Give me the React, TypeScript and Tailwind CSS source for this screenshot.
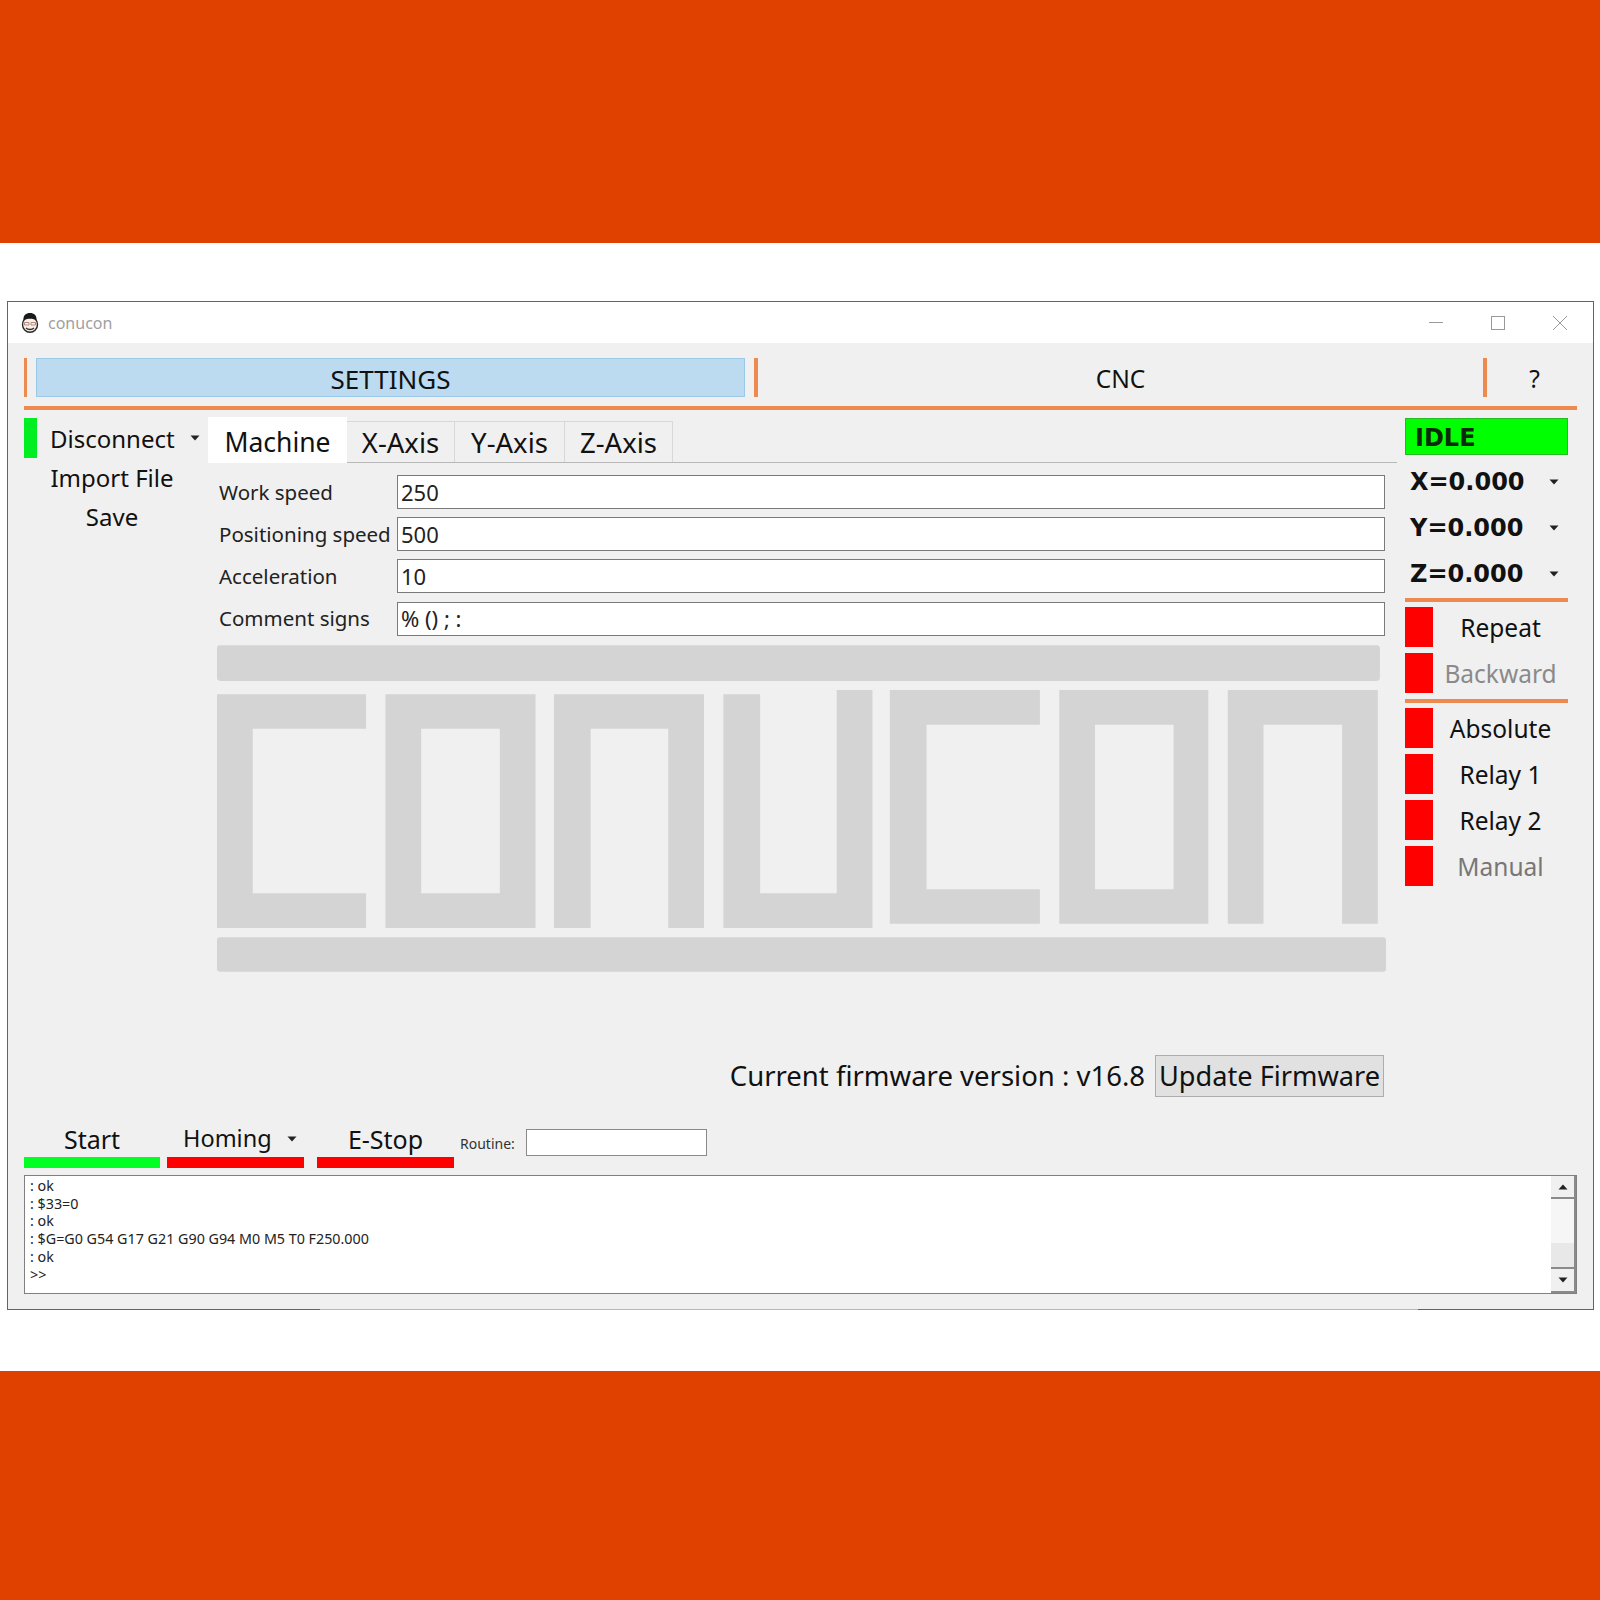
const ui = { fontFamily: '"Noto Sans", sans-serif' };
const heavy = { fontFamily: '"DejaVu Sans", sans-serif' };

const Arrow = ({ className = '' }: { className?: string }) => (
  <svg width="10" height="6" viewBox="0 0 10 6" className={className}>
    <polygon points="0.5,0.5 9.5,0.5 5,5.5" fill="#222" />
  </svg>
);

const Face = () => (
  <svg width="20" height="22" viewBox="0 0 20 22">
    <ellipse cx="10" cy="12.5" rx="7.5" ry="7.8" fill="#faf0e6" stroke="#2a2a2a" strokeWidth="1.4" />
    <path d="M3.5 8.5 C3 3 6 1 10 1 C14 1 17 3 16.5 8.5 C14 6 6 6 3.5 8.5Z" fill="#1a1a1a" />
    <path d="M4.5 10.5H9V13H4.5ZM11 10.5H15.5V13H11Z" fill="none" stroke="#b98a80" strokeWidth="1" />
    <path d="M6 16 C8 18 12 18 14 16" fill="none" stroke="#333" strokeWidth="1.3" />
  </svg>
);

const Logo = () => (
  <svg width="1169" height="327" viewBox="213 632 1145 320" className="block" fill="#d4d4d4">
    <rect x="213" y="632" width="1139" height="35" rx="3" />
    <path d="M213 680H359V714H248V875H359V909H213Z" />
    <path fillRule="evenodd" d="M378 680H525V909H378ZM413 714V875H490V714Z" />
    <path d="M543 680H690V909H655V714H579V909H543Z" />
    <path d="M709 680H745V875H820V676H855V909H709Z" />
    <path d="M872 676H1019V710H908V871H1019V905H872Z" />
    <path fillRule="evenodd" d="M1038 676H1184V905H1038ZM1073 710V871H1150V710Z" />
    <path d="M1203 676H1350V905H1315V710H1238V905H1203Z" />
    <rect x="213" y="918" width="1145" height="34" rx="3" />
  </svg>
);

const fields = [
  ['Work speed', '250'],
  ['Positioning speed', '500'],
  ['Acceleration', '10'],
  ['Comment signs', '% () ; :'],
];

const axes = ['X=0.000', 'Y=0.000', 'Z=0.000'];

const LedRow = ({ label, dim, muted }: { label: string; dim?: boolean; muted?: boolean }) => (
  <div className="flex h-[40px] items-center">
    <div className="h-[40px] w-[28px] bg-[#ff0000]" />
    <span className={`flex-1 pt-[2px] text-center text-[24.5px] ${dim ? 'text-[#8a8a8a]' : muted ? 'text-[#777]' : 'text-[#111]'}`}>{label}</span>
  </div>
);

export default function App() {
  return (
    <div className="flex h-[1600px] w-[1600px] flex-col bg-white" style={ui}>
      <div className="h-[243px] bg-[#e04000]" />
      <div className="flex-1 pl-[7px] pt-[58px]">
        <div className="flex h-[1009px] w-[1587px] flex-col border-x border-t border-[#5c666e] bg-[#f0f0f0]">
          <div className="flex h-[41px] items-center bg-white pl-[12px] pr-[26px]">
            <Face />
            <span className="ml-[8px] text-[16px] text-[#a0a0a0]">conucon</span>
            <div className="ml-auto flex items-center gap-[48px]">
              <div className="h-px w-[14px] bg-[#999]" />
              <div className="h-[14px] w-[14px] border border-[#999]" />
              <svg width="14" height="14" viewBox="0 0 14 14" stroke="#999" strokeWidth="1"><path d="M0 0L14 14M14 0L0 14" /></svg>
            </div>
          </div>

          <div className="flex flex-1 flex-col pl-[16px] pr-[15px] pt-[15px]">
            <div className="flex h-[39px] text-[24.5px] text-[#111]">
              <div className="w-[3px] bg-[#ed8a4f]" />
              <div className="ml-[9px] flex w-[709px] items-center justify-center border border-[#9cc8e8] bg-[#bcdaf0] pt-[3px] text-[26px]">SETTINGS</div>
              <div className="ml-[9px] w-[4px] bg-[#ed8a4f]" />
              <div className="flex w-[725px] items-center justify-center pt-[3px]">CNC</div>
              <div className="w-[4px] bg-[#ed8a4f]" />
              <div className="flex flex-1 items-center justify-center pl-[4px] pt-[3px]">?</div>
            </div>
            <div className="mt-[9px] h-[4px] w-[1553px] bg-[#ed8a4f]" />

            <div className="mt-[8px] flex h-[711px]">
              <div className="w-[184px] shrink-0">
                <div className="flex h-[40px] items-center">
                  <div className="h-[40px] w-[13px] bg-[#00ee22]" />
                  <span className="ml-[13px] pt-px text-[24px] leading-none text-[#111]">Disconnect</span>
                  <Arrow className="ml-[15px]" />
                </div>
                <div className="flex w-[176px] flex-col text-center text-[24px] text-[#111]">
                  <span className="h-[39px] leading-[39px]">Import File</span>
                  <span className="h-[39px] leading-[39px]">Save</span>
                </div>
              </div>

              <div className="flex w-[1189px] shrink-0 flex-col">
                <div className="flex h-[45px] items-end border-b border-[#b8b8b8] text-[27.5px] text-[#111]">
                  <div className="mb-[-1px] flex h-[46px] w-[139px] items-center justify-center bg-white pt-[5px] text-[26.5px]">Machine</div>
                  <div className="flex h-[41px] w-[108px] items-center justify-center border-r border-t border-[#d8d8d8] pt-[2px]">X-Axis</div>
                  <div className="flex h-[41px] w-[110px] items-center justify-center border-r border-t border-[#d8d8d8] pt-[2px]">Y-Axis</div>
                  <div className="flex h-[41px] w-[108px] items-center justify-center border-r border-t border-[#d8d8d8] pt-[2px]">Z-Axis</div>
                </div>

                <div className="mt-[12px] flex flex-col gap-[8.2px] pl-[11px] text-[#222]">
                  {fields.map(([label, value]) => (
                    <div key={label} className="flex h-[34px] items-center">
                      <span className="w-[178px] whitespace-nowrap text-[20.5px]">{label}</span>
                      <div className="flex h-[34px] w-[988px] items-center border border-[#7a7a7a] bg-white pl-[3px] text-[22px]">{value}</div>
                    </div>
                  ))}
                </div>

                <div className="ml-[9px] mt-[9.4px]">
                  <Logo />
                </div>

                <div className="mt-[83px] flex h-[42px] items-center justify-end pr-[13px] text-[27.5px] text-[#111]">
                  <span>Current firmware version : v16.8</span>
                  <div className="ml-[10px] flex h-[42px] w-[229px] items-center justify-center border border-[#adadad] bg-[#e1e1e1] text-[27.2px]">Update Firmware</div>
                </div>
              </div>

              <div className="ml-[8px] flex w-[163px] flex-col">
                <div className="flex h-[37px] items-center border border-[#22bb22] bg-[#00ff00] pl-[9px] pt-[2px] text-[24px] font-bold text-[#0a2a0a]" style={heavy}>IDLE</div>
                <div className="mt-[4px] flex flex-col">
                  {axes.map(a => (
                    <div key={a} className="flex h-[46px] items-center pl-[5px] text-[24px] font-bold text-[#111]" style={heavy}>
                      <span>{a}</span>
                      <Arrow className="ml-auto mr-[9px]" />
                    </div>
                  ))}
                </div>
                <div className="mt-px h-[4px] bg-[#ed8a4f]" />
                <div className="mt-[5px] flex flex-col gap-[6px]">
                  <LedRow label="Repeat" />
                  <LedRow label="Backward" dim />
                </div>
                <div className="mt-[6px] h-[4px] bg-[#ed8a4f]" />
                <div className="mt-[5px] flex flex-col gap-[6px]">
                  <LedRow label="Absolute" />
                  <LedRow label="Relay 1" />
                  <LedRow label="Relay 2" />
                  <LedRow label="Manual" muted />
                </div>
              </div>
            </div>

            <div className="flex h-[39px] text-[25px] leading-none text-[#111]">
              <div className="flex w-[136px] flex-col">
                <span className="flex h-[28px] items-center justify-center pb-[8px]">Start</span>
                <div className="h-[11px] bg-[#00ff22]" />
              </div>
              <div className="ml-[7px] flex w-[137px] flex-col">
                <span className="flex h-[28px] items-center gap-[15px] pb-[8px] pl-[16px] text-[23.5px]">Homing <Arrow /></span>
                <div className="h-[11px] bg-[#ff0000]" />
              </div>
              <div className="ml-[13px] flex w-[137px] flex-col">
                <span className="flex h-[28px] items-center justify-center pb-[8px]">E-Stop</span>
                <div className="h-[11px] bg-[#ff0000]" />
              </div>
              <span className="ml-[6px] mt-[5px] text-[14px] leading-[20px] text-[#333]">Routine:</span>
              <div className="ml-[11px] h-[27px] w-[181px] border border-[#8a8a8a] bg-white" />
            </div>

            <div className="relative mt-[7px] h-[119px] w-[1553px] border border-[#808080] bg-white pl-[5px] pt-px text-[14.3px] leading-[17.7px] text-[#222]">
              {[': ok', ': $33=0', ': ok', ': $G=G0 G54 G17 G21 G90 G94 M0 M5 T0 F250.000', ': ok', '>>'].map((l, i) => (
                <div key={i}>{l}</div>
              ))}
              <div className="absolute bottom-0 right-0 top-0 flex w-[25px] flex-col bg-[#f6f6f6]">
                <div className="flex h-[23px] items-center justify-center border-b-2 border-r-2 border-[#8a8a8a] bg-[#f0f0f0]">
                  <Arrow className="rotate-180" />
                </div>
                <div className="flex-1 border-r-2 border-[#8a8a8a]" />
                <div className="h-[24px] border-r-2 border-[#8a8a8a] bg-[#e8e8e8]" />
                <div className="flex h-[26px] items-center justify-center border-b-2 border-r-2 border-t-2 border-[#8a8a8a] bg-[#f0f0f0]">
                  <Arrow />
                </div>
              </div>
            </div>
          </div>

          <div className="flex h-px">
            <div className="w-[312px] bg-[#5c666e]" />
            <div className="flex-1 bg-[#b8b8b8]" />
            <div className="w-[175px] bg-[#5c666e]" />
          </div>
        </div>
      </div>
      <div className="h-[229px] bg-[#e04000]" />
    </div>
  );
}
